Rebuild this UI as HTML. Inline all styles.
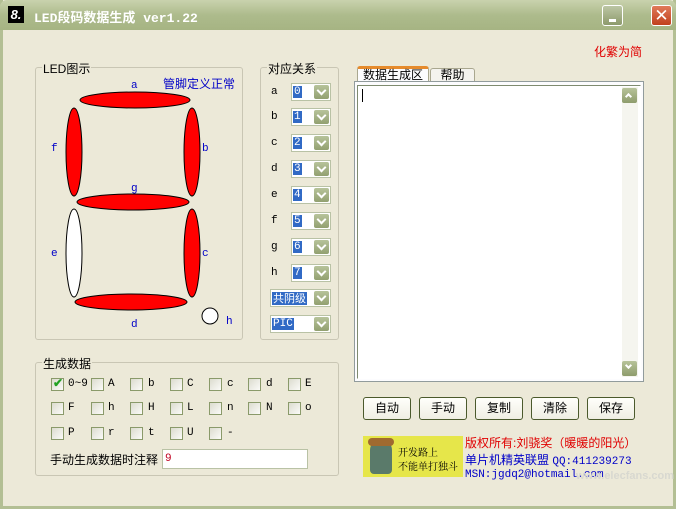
<!DOCTYPE html>
<html><head><meta charset="utf-8"><style>
*{margin:0;padding:0;box-sizing:border-box}
body{width:676px;height:509px;overflow:hidden;background:#ece9d8;font-family:"Liberation Sans","Noto Sans CJK SC",sans-serif;font-size:12px;position:relative}
.a{position:absolute}
.win{position:absolute;left:0;top:0;width:676px;height:509px;border:3px solid #b3bf94;border-top:none}
.title{position:absolute;left:0;top:0;width:676px;height:30px;background:linear-gradient(#c9d2ad,#adbb8c 50%,#a6b483);border-radius:7px 7px 0 0}
.grp{position:absolute;border:1px solid #c9c6b4;border-radius:3px}
.grp .lg{position:absolute;top:-8px;left:6px;background:#ece9d8;padding:0 1px;font-size:12px}
.lb{position:absolute;font-family:"Liberation Mono",serif;font-size:11px;color:#000}
.cb{position:absolute;width:40px;height:18px;background:#fff;border:1px solid #b9c2a5}
.cb .v{position:absolute;left:1px;top:2px;background:#316ac5;color:#fff;font-size:11px;line-height:12px;padding:0 1px;font-family:"Liberation Mono",monospace}
.cb .d{position:absolute;right:1px;top:1px;width:15px;height:14px;background:linear-gradient(#b7c39a,#92a070);border-radius:2px}
.cb .d:after{content:"";position:absolute;left:4px;top:2px;width:5px;height:5px;border-right:2px solid #fff;border-bottom:2px solid #fff;transform:rotate(45deg)}
.ck{position:absolute;width:13px;height:13px;border:1px solid #8a9a6a;background:linear-gradient(135deg,#dcdccf,#fbfbf8)}
.ckl{position:absolute;font-family:"Liberation Mono",monospace;font-size:11px}
.btn{position:absolute;top:397px;width:48px;height:23px;border:1px solid #4b5a2c;border-radius:3px;background:linear-gradient(#fffffb,#efeee3);text-align:center;line-height:21px;font-size:12px}
</style></head><body>
<div class="win"></div>
<div class="title"></div>
<div class="a" style="left:8px;top:6px;width:16px;height:17px;background:#000;color:#fff;font:italic bold 13px 'Liberation Sans';text-align:center;line-height:17px">8.</div>
<div class="a" style="left:34px;top:7px;color:#fff;font-size:13px;font-weight:bold;font-family:'Liberation Mono','Noto Sans CJK SC',monospace">LED段码数据生成 ver1.22</div>
<div class="a" style="left:602px;top:5px;width:21px;height:21px;border:1px solid #fff;border-radius:3px;background:linear-gradient(#bcc6a4,#8d9a6c)"><div class="a" style="left:6px;top:13px;width:7px;height:3px;background:#fff"></div></div>
<div class="a" style="left:651px;top:5px;width:21px;height:21px;border:1px solid #fff;border-radius:3px;background:linear-gradient(#e07a5a,#c1401d);color:#fff;font-size:17px;text-align:center;line-height:19px">✕</div>
<div class="a" style="left:594px;top:43px;color:#e00000;font-size:12px">化繁为简</div>

<div class="grp" style="left:35px;top:67px;width:208px;height:273px"><span class="lg">LED图示</span></div>
<div class="a" style="left:163px;top:75px;color:#0000c8;font-size:12px">管脚定义正常</div>
<svg class="a" style="left:0;top:0" width="260" height="345">
<g stroke="#000" stroke-width="1" fill="#ff0000">
<ellipse cx="135" cy="100" rx="55" ry="8"/>
<ellipse cx="74" cy="152" rx="8" ry="44"/>
<ellipse cx="192" cy="152" rx="8" ry="44"/>
<ellipse cx="133" cy="202" rx="56" ry="8"/>
<ellipse cx="74" cy="253" rx="8" ry="44" fill="#fff"/>
<ellipse cx="192" cy="253" rx="8" ry="44"/>
<ellipse cx="131" cy="302" rx="56" ry="8"/>
<circle cx="210" cy="316" r="8" fill="#fff"/>
</g>
<g fill="#0000c8" font-family="Liberation Mono" font-size="11">
<text x="131" y="88">a</text><text x="202" y="151">b</text><text x="202" y="256">c</text>
<text x="131" y="327">d</text><text x="51" y="256">e</text><text x="51" y="151">f</text>
<text x="131" y="191">g</text><text x="226" y="324">h</text></g>
</svg>

<div class="grp" style="left:260px;top:67px;width:79px;height:273px"><span class="lg">对应关系</span></div>
<div class="lb" style="left:271px;top:86px">a</div><div class="cb" style="left:291px;top:83px"><span class="v">0</span><span class="d"></span></div>
<div class="lb" style="left:271px;top:111px">b</div><div class="cb" style="left:291px;top:108px"><span class="v">1</span><span class="d"></span></div>
<div class="lb" style="left:271px;top:137px">c</div><div class="cb" style="left:291px;top:134px"><span class="v">2</span><span class="d"></span></div>
<div class="lb" style="left:271px;top:163px">d</div><div class="cb" style="left:291px;top:160px"><span class="v">3</span><span class="d"></span></div>
<div class="lb" style="left:271px;top:189px">e</div><div class="cb" style="left:291px;top:186px"><span class="v">4</span><span class="d"></span></div>
<div class="lb" style="left:271px;top:215px">f</div><div class="cb" style="left:291px;top:212px"><span class="v">5</span><span class="d"></span></div>
<div class="lb" style="left:271px;top:241px">g</div><div class="cb" style="left:291px;top:238px"><span class="v">6</span><span class="d"></span></div>
<div class="lb" style="left:271px;top:267px">h</div><div class="cb" style="left:291px;top:264px"><span class="v">7</span><span class="d"></span></div>
<div class="cb" style="left:270px;top:289px;width:61px"><span class="v" style="font-family:'Noto Sans CJK SC';line-height:13px">共阴级</span><span class="d"></span></div>
<div class="cb" style="left:270px;top:315px;width:61px"><span class="v">PIC</span><span class="d"></span></div>

<div class="grp" style="left:35px;top:362px;width:304px;height:114px"><span class="lg">生成数据</span></div>
<div class="ck" style="left:51px;top:378px"><span style="position:absolute;left:1px;top:-3px;color:#21a121;font-size:12px;font-weight:bold">✔</span></div><div class="ckl" style="left:68px;top:378px">0~9</div>
<div class="ck" style="left:91px;top:378px"></div><div class="ckl" style="left:108px;top:378px">A</div>
<div class="ck" style="left:130px;top:378px"></div><div class="ckl" style="left:148px;top:378px">b</div>
<div class="ck" style="left:170px;top:378px"></div><div class="ckl" style="left:187px;top:378px">C</div>
<div class="ck" style="left:209px;top:378px"></div><div class="ckl" style="left:227px;top:378px">c</div>
<div class="ck" style="left:248px;top:378px"></div><div class="ckl" style="left:266px;top:378px">d</div>
<div class="ck" style="left:288px;top:378px"></div><div class="ckl" style="left:305px;top:378px">E</div>
<div class="ck" style="left:51px;top:402px"></div><div class="ckl" style="left:68px;top:402px">F</div>
<div class="ck" style="left:91px;top:402px"></div><div class="ckl" style="left:108px;top:402px">h</div>
<div class="ck" style="left:130px;top:402px"></div><div class="ckl" style="left:148px;top:402px">H</div>
<div class="ck" style="left:170px;top:402px"></div><div class="ckl" style="left:187px;top:402px">L</div>
<div class="ck" style="left:209px;top:402px"></div><div class="ckl" style="left:227px;top:402px">n</div>
<div class="ck" style="left:248px;top:402px"></div><div class="ckl" style="left:266px;top:402px">N</div>
<div class="ck" style="left:288px;top:402px"></div><div class="ckl" style="left:305px;top:402px">o</div>
<div class="ck" style="left:51px;top:427px"></div><div class="ckl" style="left:68px;top:427px">P</div>
<div class="ck" style="left:91px;top:427px"></div><div class="ckl" style="left:108px;top:427px">r</div>
<div class="ck" style="left:130px;top:427px"></div><div class="ckl" style="left:148px;top:427px">t</div>
<div class="ck" style="left:170px;top:427px"></div><div class="ckl" style="left:187px;top:427px">U</div>
<div class="ck" style="left:209px;top:427px"></div><div class="ckl" style="left:227px;top:427px">-</div>
<div class="a" style="left:50px;top:451px;font-size:12px">手动生成数据时注释</div>
<div class="a" style="left:162px;top:449px;width:146px;height:20px;background:#fff;border:1px solid #b9c2a5;color:#c00020;font-family:'Liberation Mono';font-size:11px;padding:3px 2px">9</div>

<div class="a" style="left:357px;top:66px;width:72px;height:16px;background:#fcfcfe;border:1px solid #a9a78f;border-top:3px solid #e68b2c;border-bottom:none;border-radius:3px 3px 0 0;text-align:center;line-height:12px;font-size:12px">数据生成区</div>
<div class="a" style="left:430px;top:68px;width:45px;height:14px;background:#f4f3ee;border:1px solid #a9a78f;border-bottom:none;border-radius:3px 3px 0 0;text-align:center;line-height:13px;font-size:12px">帮助</div>
<div class="a" style="left:354px;top:81px;width:290px;height:301px;border:1px solid #919b9c;background:#fcfcfe"></div>
<div class="a" style="left:357px;top:85px;width:284px;height:294px;background:#fff;border:1px solid #7f8b6f;border-right-color:#fff;border-bottom-color:#fff"></div>
<div class="a" style="left:362px;top:89px;width:1px;height:13px;background:#000"></div>
<div class="a" style="left:622px;top:87px;width:16px;height:290px;background:#f5f5ef"></div>
<div class="a" style="left:622px;top:88px;width:15px;height:15px;background:linear-gradient(#b7c39a,#8e9c6c);border-radius:2px"><div class="a" style="left:4px;top:6px;width:5px;height:5px;border-left:2px solid #fff;border-top:2px solid #fff;transform:rotate(45deg)"></div></div>
<div class="a" style="left:622px;top:361px;width:15px;height:15px;background:linear-gradient(#b7c39a,#8e9c6c);border-radius:2px"><div class="a" style="left:4px;top:2px;width:5px;height:5px;border-right:2px solid #fff;border-bottom:2px solid #fff;transform:rotate(45deg)"></div></div>

<div class="btn" style="left:363px">自动</div>
<div class="btn" style="left:419px">手动</div>
<div class="btn" style="left:475px">复制</div>
<div class="btn" style="left:531px">清除</div>
<div class="btn" style="left:587px">保存</div>

<div class="a" style="left:363px;top:436px;width:100px;height:41px;background:#e6e64a"></div>
<div class="a" style="left:370px;top:440px;width:22px;height:34px;background:#5a7a6a;border-radius:10px 10px 4px 4px"></div>
<div class="a" style="left:368px;top:438px;width:26px;height:8px;background:#a06a30;border-radius:4px"></div>
<div class="a" style="left:398px;top:444px;font-size:10px;font-family:'Noto Serif CJK SC',serif">开发路上</div>
<div class="a" style="left:398px;top:458px;font-size:10px;font-family:'Noto Serif CJK SC',serif">不能单打独斗</div>
<div class="a" style="left:465px;top:434px;color:#e00000;font-size:12px">版权所有:刘骁奖（暖暖的阳光）</div>
<div class="a" style="left:465px;top:451px;color:#0000c8;font-size:12px">单片机精英联盟 <span style="font-family:'Liberation Mono';font-size:11px">QQ:411239273</span></div>
<div class="a" style="left:465px;top:469px;color:#0000c8;font-family:'Liberation Mono';font-size:11px">MSN:jgdq2@hotmail.com</div>
<div class="a" style="left:576px;top:470px;color:#d8d8d0;font-size:11px;font-weight:bold">www.elecfans.com</div>
</body></html>
